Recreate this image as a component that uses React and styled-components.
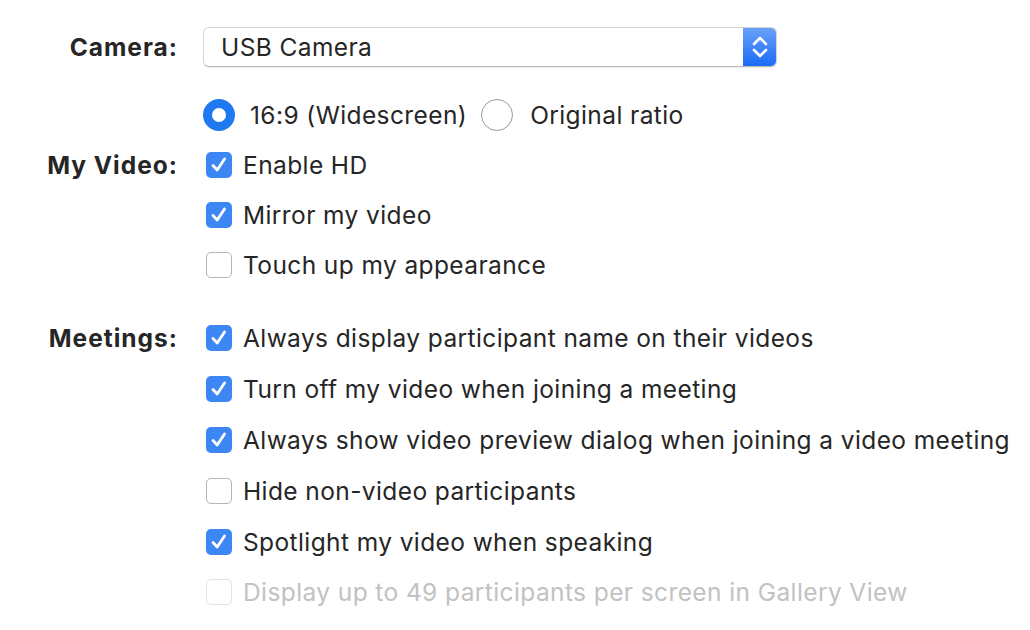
import styled, { createGlobalStyle } from "styled-components";

const GlobalStyle = createGlobalStyle`
  body {
    margin: 0;
    background: #ffffff;
    font-family: Inter, "Noto Sans", sans-serif;
    color: #262626;
  }
`;

const Page = styled.div`
  width: 1030px;
  height: 630px;
  padding-top: 27px;
  box-sizing: border-box;
  overflow: hidden;
`;

const Section = styled.div`
  display: grid;
  grid-template-columns: 178px 1fr;
  column-gap: 25px;
  margin-top: ${(p) => p.$gap || 0}px;
`;

const Label = styled.div`
  font-size: 24.5px;
  font-weight: 700;
  letter-spacing: 1px;
  text-align: right;
  height: ${(p) => p.$h || 50}px;
  line-height: ${(p) => p.$h || 50}px;
`;

const Controls = styled.div`
  display: flex;
  flex-direction: column;
`;

const Select = styled.div`
  width: 574px;
  height: 40px;
  box-sizing: border-box;
  display: flex;
  align-items: center;
  border: 1px solid #d4d4d4;
  border-bottom-color: #bdbdbd;
  border-radius: 6px;
  box-shadow: 0 1px 1px rgba(0, 0, 0, 0.08);
  overflow: hidden;
  font-size: 24.5px;
  letter-spacing: 0.4px;
`;

const SelectText = styled.div`
  flex: 1;
  padding-left: 17px;
`;

const Stepper = styled.div`
  width: 33px;
  height: 100%;
  display: flex;
  align-items: center;
  justify-content: center;
  background: linear-gradient(#6aa0f8, #1a6cf7);
`;

const Row = styled.div`
  display: flex;
  align-items: center;
  height: ${(p) => p.$h || 50}px;
  font-size: 24.5px;
  letter-spacing: 0.4px;
  color: ${(p) => (p.$disabled ? "#c2c2c2" : "#262626")};
`;

const RadioRow = styled(Row)`
  margin-top: 23px;
`;

const Radio = styled.span`
  width: 32px;
  height: 32px;
  box-sizing: border-box;
  border-radius: 50%;
  flex-shrink: 0;
  border: ${(p) => (p.$on ? "9px solid #1f7af2" : "1.5px solid #9a9a9a")};
  background: #ffffff;
  margin-right: ${(p) => (p.$on ? 15 : 17)}px;
`;

const RadioText = styled.span`
  margin-right: 14px;
`;

const Box = styled.span`
  width: 26px;
  height: 26px;
  box-sizing: border-box;
  margin-left: 3px;
  margin-right: 11px;
  border-radius: 5px;
  flex-shrink: 0;
  display: flex;
  align-items: center;
  justify-content: center;
  background: ${(p) => (p.$on ? "#3d87f5" : "#ffffff")};
  border: ${(p) =>
    p.$on
      ? "none"
      : p.$disabled
      ? "1.5px solid #e2e2e2"
      : "1.5px solid #b5b5b5"};
`;

const Check = () => (
  <svg width="20" height="20" viewBox="0 0 20 20" fill="none">
    <path
      d="M4 10.5 L8.2 15 L15.5 4"
      stroke="#ffffff"
      strokeWidth="2.8"
      strokeLinecap="round"
      strokeLinejoin="round"
    />
  </svg>
);

const Arrows = () => (
  <svg width="18" height="28" viewBox="0 0 18 28" fill="none">
    <path
      d="M3 11 L9 5 L15 11 M3 17 L9 23 L15 17"
      stroke="#ffffff"
      strokeWidth="2.6"
      strokeLinecap="round"
      strokeLinejoin="round"
    />
  </svg>
);

const CheckRow = ({ on, disabled, h, children }) => (
  <Row $disabled={disabled} $h={h}>
    <Box $on={on} $disabled={disabled}>
      {on && <Check />}
    </Box>
    {children}
  </Row>
);

const meetings = [
  { text: "Always display participant name on their videos", on: true },
  { text: "Turn off my video when joining a meeting", on: true },
  { text: "Always show video preview dialog when joining a video meeting", on: true },
  { text: "Hide non-video participants", on: false },
  { text: "Spotlight my video when speaking", on: true },
  { text: "Display up to 49 participants per screen in Gallery View", on: false, disabled: true },
];

export default function App() {
  return (
    <Page>
      <GlobalStyle />
      <Section>
        <Label $h={40}>Camera:</Label>
        <Controls>
          <Select>
            <SelectText>USB Camera</SelectText>
            <Stepper>
              <Arrows />
            </Stepper>
          </Select>
          <RadioRow>
            <Radio $on />
            <RadioText>16:9 (Widescreen)</RadioText>
            <Radio />
            <span>Original ratio</span>
          </RadioRow>
        </Controls>
      </Section>
      <Section>
        <Label>My Video:</Label>
        <Controls>
          <CheckRow on>Enable HD</CheckRow>
          <CheckRow on>Mirror my video</CheckRow>
          <CheckRow>Touch up my appearance</CheckRow>
        </Controls>
      </Section>
      <Section $gap={23}>
        <Label $h={50.8}>Meetings:</Label>
        <Controls>
          {meetings.map((m) => (
            <CheckRow key={m.text} on={m.on} disabled={m.disabled} h={50.8}>
              {m.text}
            </CheckRow>
          ))}
        </Controls>
      </Section>
    </Page>
  );
}
